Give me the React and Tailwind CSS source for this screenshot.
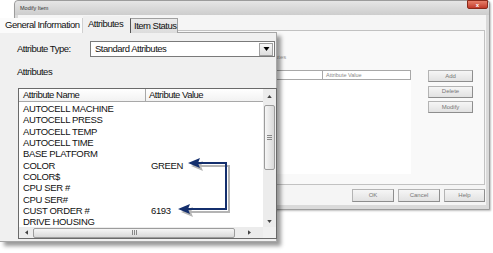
import React from "react";

const rows = [
  ["AUTOCELL MACHINE", ""],
  ["AUTOCELL PRESS", ""],
  ["AUTOCELL TEMP", ""],
  ["AUTOCELL TIME", ""],
  ["BASE PLATFORM", ""],
  ["COLOR", "GREEN"],
  ["COLOR$", ""],
  ["CPU SER #", ""],
  ["CPU SER#", ""],
  ["CUST ORDER #", "6193"],
  ["DRIVE HOUSING", ""],
];

function Tri({ dir, className }) {
  const pts = {
    up: "0,4 3,0 6,4",
    down: "0,0 6,0 3,4",
    left: "4,0 4,6 0,3",
    right: "0,0 0,6 4,3",
  }[dir];
  const vb = dir === "up" || dir === "down" ? "0 0 6 4" : "0 0 4 6";
  return (
    <svg viewBox={vb} className={className}>
      <polygon points={pts} fill="currentColor" />
    </svg>
  );
}

function SmallButton({ children, className }) {
  return (
    <div
      className={
        "flex items-center justify-center border border-[#b4b4b4] border-b-[#8e8e8e] border-r-[#8e8e8e] bg-gradient-to-b from-[#f6f6f6] to-[#e2e2e2] text-[6px] text-[#777]" +
        " " +
        className
      }
    >
      {children}
    </div>
  );
}

function Background() {
  return (
    <div className="ml-[14px] flex h-[210px] w-[476px] flex-col rounded-t-[4px] border border-[#9c9c9c] bg-[#dadada] shadow-[1px_1px_2px_rgba(0,0,0,0.25)]">
      {/* title bar */}
      <div className="flex h-[14px] items-start justify-between rounded-t-[4px] bg-gradient-to-b from-[#e6e6e6] to-[#cdcdcd]">
        <span className="pl-[5px] pt-[4px] text-[5.5px] leading-[7px] text-[#333]">Modify Item</span>
        <div className="mr-[1px] -mt-px flex h-[9px] w-[21px] items-center justify-center rounded-b-[2px] border border-[#8a2a1a] bg-gradient-to-b from-[#e8806a] to-[#c0392a] text-[6px] leading-none font-bold text-white">
          x
        </div>
      </div>
      {/* body */}
      <div className="mx-[3px] mb-[4px] flex flex-1 flex-col bg-[#f5f5f5] pt-[15px]">
        <div className="mr-[1px] flex h-[155px] items-start justify-end gap-[17px] border border-[#c2c2c2] bg-[#f9f9f9] pr-[11px]">
          <div className="mt-[21px] flex w-[152px] flex-col">
            <span className="h-[10px] pl-[2px] text-[6px] leading-[10px] text-[#999]">Attributes</span>
            <div className="mt-[8px] flex h-[10px] border border-[#a8a8a8] bg-white text-[5.5px] leading-[8px] text-[#888]">
              <div className="w-[63px] border-r border-[#a8a8a8]" />
              <div className="pl-[3px]">Attribute Value</div>
            </div>
            <div className="h-[94px] bg-white" />
          </div>
          <div className="mt-[39px] flex w-[45px] flex-col gap-[3.5px]">
            <SmallButton className="h-[12px]">Add</SmallButton>
            <SmallButton className="h-[12px]">Delete</SmallButton>
            <SmallButton className="h-[12px]">Modify</SmallButton>
          </div>
        </div>
        <div className="mr-[1px] mt-[4px] flex justify-end gap-[4px]">
          <SmallButton className="h-[13px] w-[42px] text-[#444]">OK</SmallButton>
          <SmallButton className="h-[13px] w-[42px] text-[#444]">Cancel</SmallButton>
          <SmallButton className="h-[13px] w-[41px] text-[#444]">Help</SmallButton>
        </div>
      </div>
    </div>
  );
}

function Callout() {
  return (
    <div className="absolute left-0 top-[16px] w-[277px] text-[9.5px] tracking-[-0.5px] text-[#111]">
      {/* tabs */}
      <div className="relative z-10 -mb-px flex h-[17px] items-end">
        <div className="flex h-[15px] w-[83px] items-center border-r border-[#d0d0d0] bg-[#fbfbfb] pl-[5px]">
          General Information
        </div>
        <div className="flex h-[17px] w-[47px] items-center bg-[#f0f0f0] pl-[5px]">Attributes</div>
        <div className="flex h-[15px] w-[48px] items-center border border-b-0 border-[#a0a0a0] border-l-[#555] bg-gradient-to-b from-[#ececec] to-[#dcdcdc] pl-[3px]">
          Item Status
        </div>
      </div>
      {/* panel */}
      <div className="flex h-[210px] flex-col border-t border-r border-b border-[#a6a6a6] bg-[#f0f0f0] shadow-[4px_4px_4px_rgba(0,0,0,0.4)]">
        <div className="flex items-center pl-[17px] pt-[8px]">
          <span className="w-[73px]">Attribute Type:</span>
          <div className="flex h-[16px] w-[185px] items-center justify-between border border-[#7a7a7a] bg-white pl-[4px]">
            <span>Standard Attributes</span>
            <div className="mr-px flex h-[13px] w-[14px] items-center justify-center border border-[#a0a0a0] bg-gradient-to-b from-[#f8f8f8] to-[#dedede]">
              <Tri dir="down" className="h-[4px] w-[7px] text-black" />
            </div>
          </div>
        </div>
        <div className="mt-[10px] pl-[17px] leading-[10px]">Attributes</div>
        <div className="ml-[18px] mt-[11px] flex h-[151px] w-[259px] flex-col border border-[#6a6a6a] bg-white">
          <div className="flex flex-1">
            <div className="flex flex-1 flex-col overflow-hidden">
              <div className="flex h-[13px] items-center border-b border-[#a8a8a8] bg-gradient-to-b from-white to-[#f2f2f2]">
                <div className="h-full w-[127px] border-r border-[#a8a8a8] pl-[4px] leading-[12px]">Attribute Name</div>
                <div className="pl-[3px] leading-[12px]">Attribute Value</div>
              </div>
              <div className="pt-[1px] tracking-[-0.35px]">
                {rows.map(([n, v]) => (
                  <div key={n} className="flex h-[11.3px] items-center leading-[11px]">
                    <div className="w-[127px] pl-[4px]">{n}</div>
                    <div className="pl-[5px]">{v}</div>
                  </div>
                ))}
              </div>
            </div>
            {/* vertical scrollbar */}
            <div className="flex w-[13px] flex-col items-center bg-[#ececec]">
              <div className="flex h-[15px] items-center">
                <Tri dir="up" className="h-[3px] w-[5px] text-[#444]" />
              </div>
              <div className="mt-px flex h-[65px] w-[11px] flex-col items-center justify-center gap-[1px] rounded-[2px] border border-[#9c9c9c] bg-gradient-to-r from-[#f6f6f6] to-[#d9d9d9]">
                <div className="h-px w-[5px] bg-[#888]" />
                <div className="h-px w-[5px] bg-[#888]" />
                <div className="h-px w-[5px] bg-[#888]" />
              </div>
              <div className="flex-1" />
              <div className="flex h-[12px] items-center">
                <Tri dir="down" className="h-[3px] w-[5px] text-[#444]" />
              </div>
            </div>
          </div>
          {/* horizontal scrollbar */}
          <div className="flex h-[12px]">
            <div className="flex flex-1 items-center bg-[#ececec]">
              <div className="flex w-[14px] justify-center">
                <Tri dir="left" className="h-[5px] w-[3px] text-[#444]" />
              </div>
              <div className="flex h-[10px] w-[202px] items-center justify-center gap-[1px] rounded-[2px] border border-[#9c9c9c] bg-gradient-to-b from-[#f6f6f6] to-[#d9d9d9]">
                <div className="h-[5px] w-px bg-[#888]" />
                <div className="h-[5px] w-px bg-[#888]" />
                <div className="h-[5px] w-px bg-[#888]" />
              </div>
              <div className="flex flex-1 justify-center">
                <Tri dir="right" className="h-[5px] w-[3px] text-[#444]" />
              </div>
            </div>
            <div className="w-[13px] bg-[#f0f0f0]" />
          </div>
        </div>
      </div>
    </div>
  );
}

function Arrows() {
  return (
    <svg className="pointer-events-none absolute left-0 top-0" width="493" height="253" viewBox="0 0 493 253">
      <g transform="translate(3,3)" fill="#b4b4b4" stroke="#b4b4b4">
        <polyline points="196,163 226,163 226,209 186,209" fill="none" strokeWidth="2" />
        <polygon points="188,163 200,158 198,163 200,168" stroke="none" />
        <polygon points="178,209 190,204 188,209 190,214" stroke="none" />
      </g>
      <g fill="#142f6d" stroke="#142f6d">
        <polyline points="196,163 226,163 226,209 186,209" fill="none" strokeWidth="2" />
        <polygon points="188,163 200,158 198,163 200,168" stroke="none" />
        <polygon points="178,209 190,204 188,209 190,214" stroke="none" />
      </g>
    </svg>
  );
}

export default function App() {
  return (
    <div className="relative h-[253px] w-[493px] overflow-hidden bg-white font-['Liberation_Sans',Arial,sans-serif]">
      <Background />
      <Callout />
      <Arrows />
    </div>
  );
}
